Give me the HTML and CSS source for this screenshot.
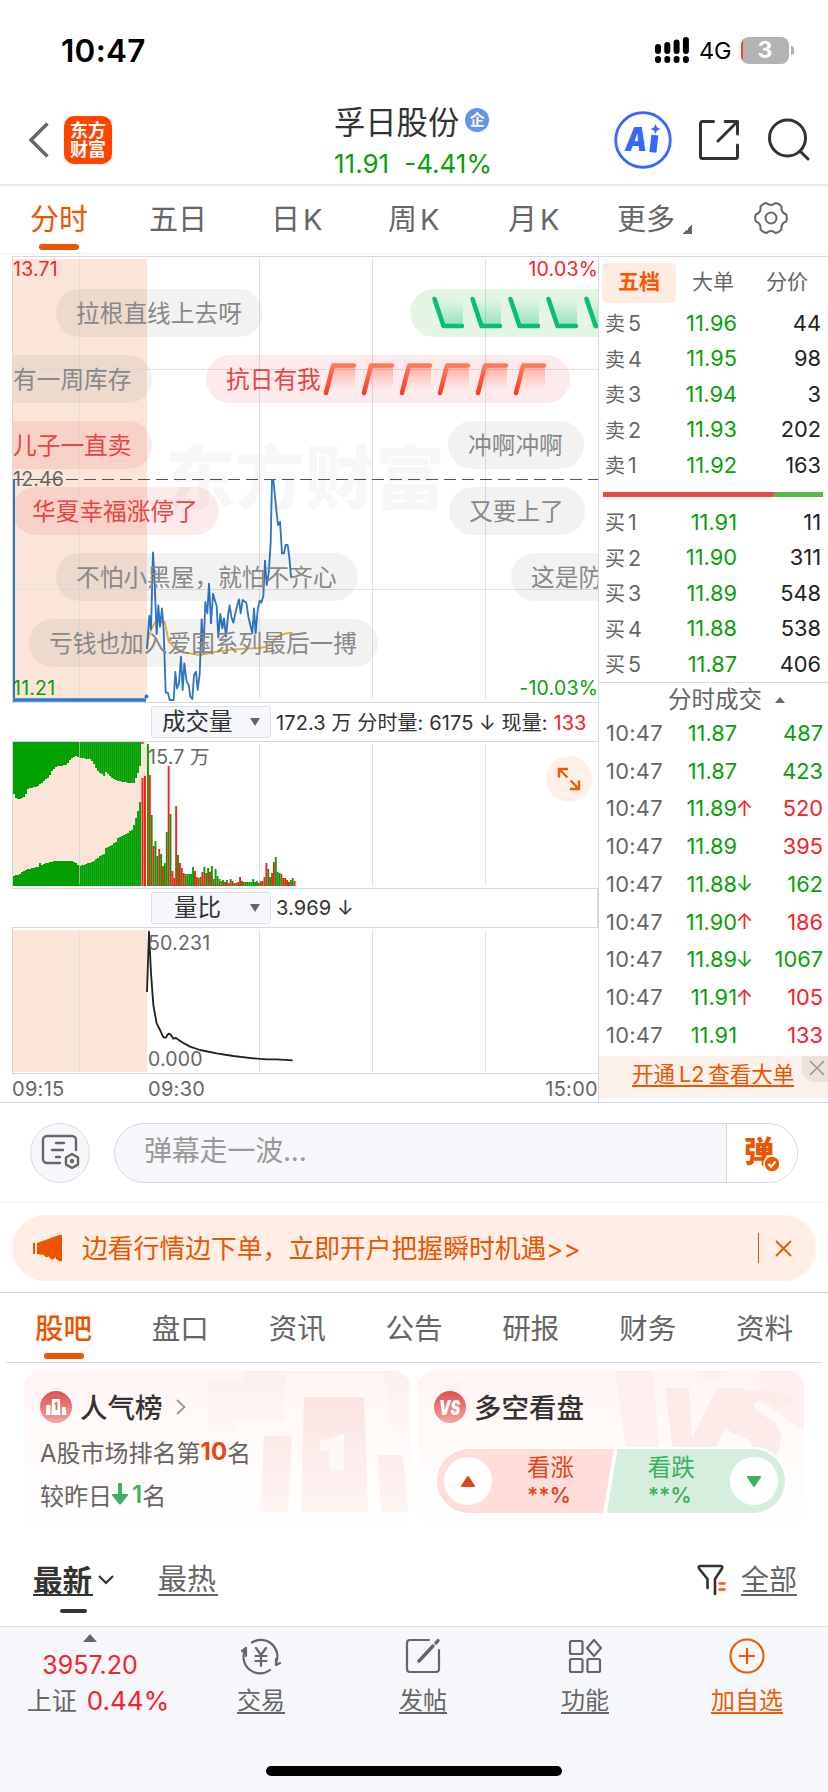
FILE: index.html
```html
<!DOCTYPE html>
<html lang="zh-CN">
  <head>
    <meta charset="UTF-8" />
    <meta name="viewport" content="width=device-width, initial-scale=1.0" />
    <title>孚日股份</title>
    <link rel="stylesheet" href="styles.css">
  </head>
  <body>
    <div class="status-bar">
      <span class="time">10:47</span>
      <svg class="signal" width="34" height="26" viewBox="0 0 34 26">
        <path d="M3 10v4M12.300 8v6M21.600 5.500v8.500M30.900 3v11" stroke="#000" stroke-width="6" stroke-linecap="round"/>
        <path d="M3 22v1M12.300 22v1M21.600 22v1M30.900 22v1" stroke="#000" stroke-width="6" stroke-linecap="round"/>
      </svg>
      <span class="network">4G</span>
      <div class="battery"><span>3</span></div>
      <i class="battery-tip"></i>
    </div>

    <header class="header">
      <svg class="back" width="22" height="38" viewBox="0 0 22 38" fill="none" stroke="#666" stroke-width="3.500">
        <path d="M19.500 2.500L3 19l16.500 16.500"/>
      </svg>
      <div class="logo"><span>东方</span><span>财富</span></div>
      <div class="stock">
        <div class="stock-name">孚日股份<span class="badge">企</span></div>
        <div class="stock-price"><span>11.91</span><span>-4.41%</span></div>
      </div>
      <svg class="ai" width="58" height="58" viewBox="0 0 58 58">
        <circle cx="29" cy="29" r="27.300" fill="none" stroke="#3468ff" stroke-width="2.800"/>
        <text x="11" y="40" class="ai-text" textLength="22" lengthAdjust="spacingAndGlyphs">A</text>
        <path d="M40.500 27.500l-1.200 10.500" stroke="#3468ff" stroke-width="7" stroke-linecap="square"/>
        <path d="M41.500 13l1.500 3.500 3.500 1.500-3.500 1.500-1.500 3.500-1.500-3.500-3.500-1.500 3.500-1.500z" fill="#3468ff"/>
      </svg>
      <svg class="share" width="42" height="42" viewBox="0 0 42 42" fill="none" stroke="#333" stroke-width="3" stroke-linecap="round" stroke-linejoin="round">
        <path d="M15.500 2.500H4.500a2 2 0 0 0-2 2v33a2 2 0 0 0 2 2h33a2 2 0 0 0 2-2V26M27 2.500h12.500V15M39 3L20 22"/>
      </svg>
      <svg class="search" width="44" height="44" viewBox="0 0 44 44" fill="none" stroke="#333" stroke-width="3" stroke-linecap="round">
        <circle cx="20.500" cy="20" r="18"/>
        <path d="M33 33l8 8"/>
      </svg>
    </header>

    <nav class="period-tabs">
      <span class="period active">分时</span>
      <span class="period">五日</span>
      <span class="period">日<b>K</b></span>
      <span class="period">周<b>K</b></span>
      <span class="period">月<b>K</b></span>
      <span class="period more">更多<i></i></span>
      <svg class="gear" width="36" height="36" viewBox="-18 -18 36 36" fill="none" stroke="#666" stroke-width="2" stroke-linejoin="round">
        <path d="M15.200-3.500Q16.500 0 15.200 3.500 9.500 5.500 10.600 11.400 8.300 14.300 4.600 14.900 0 11-4.600 14.900-8.300 14.300-10.600 11.400-9.500 5.500-15.200 3.500-16.500 0-15.200-3.500-9.500-5.500-10.600-11.400-8.300-14.300-4.600-14.900 0-11 4.600-14.900 8.300-14.300 10.600-11.400 9.500-5.500 15.200-3.500z"/>
        <circle r="5.500"/>
      </svg>
    </nav>

    <main class="market">
      <section class="charts">
        <div class="chart price-chart">
          <div class="watermark">东方财富</div>
          <svg width="586" height="446" viewBox="0 0 586 446" fill="none">
            <rect x="1" y="2" width="134" height="442" fill="#fbe5d8"/>
            <path d="M67.500 1v441M247.500 1v441M360.500 1v441M473.500 1v441M1 112.500h585M1 332.500h585" stroke="#e0e2ea"/>
            <path d="M0 222.500h586" stroke="#555" stroke-dasharray="12 6"/>
            <path d="M2 222v219" stroke="#2f76c5" stroke-width="2"/>
            <path d="M1 443h133" stroke="#2f76c5" stroke-width="3.500"/>
            <circle cx="134.500" cy="439.500" r="2" fill="#2f76c5"/>
            <g transform="translate(-12 213) scale(.33333)" stroke-width="5.500" stroke-linejoin="round">
              <polyline stroke="#f5b233" points="441,537 446,500 452,482 458,470 466,455 494,455 499,480 506,515 515,522 524,535 550,548 575,551 600,555 625,550 650,545 700,538 780,534 800,530 818,515 835,498 855,491 878,488"/>
              <polyline stroke="#2f76c5" points="441,537 448,437 453,478 459,247 464,340 470,492 475,406 480,470 486,415 491,480 497,667 504,669 509,690 521,690 526,606 531,655 537,640 543,560 548,660 553,580 560,635 566,645 571,680 577,687 582,615 588,605 593,660 599,612 605,448 610,548 616,396 622,430 627,341 633,460 639,372 650,408 655,502 661,432 667,475 672,445 678,500 684,437 689,406 694,440 700,458 706,430 712,405 717,388 722,430 728,390 739,398 745,440 757,490 762,415 767,490 773,420 779,392 784,398 790,378 795,272 800,345 806,310 812,220 816,30 820,30 828,110 834,165 840,155 846,250 852,250 857,225 863,225 868,262 873,320 878,320"/>
            </g>
          </svg>
          <span class="axis top-left red">13.71</span>
          <span class="axis top-right red">10.03%</span>
          <span class="axis mid-left">12.46</span>
          <span class="axis bottom-left green">11.21</span>
          <span class="axis bottom-right green">-10.03%</span>

          <!-- bullet comments -->
          <div class="bullet row1" style="left: 44px">拉根直线上去呀</div>
          <div class="bullet row1 bullet-green" style="left: 398px">
            <svg width="190" height="34" viewBox="0 0 190 34">
              <defs>
                <linearGradient id="gfade" x1="0" y1="0" x2="0" y2="1"><stop offset="0" stop-color="#0cc07a" stop-opacity="0"/><stop offset="1" stop-color="#0cc07a" stop-opacity=".35"/></linearGradient>
                <g id="down"><path d="M4 3h28v26H13z" fill="url(#gfade)"/><path d="M3.500 3l9 27H31" fill="none" stroke="#08bf78" stroke-width="4.500" stroke-linecap="round" stroke-linejoin="round"/></g>
              </defs>
              <use href="#down"/><use href="#down" x="38"/><use href="#down" x="76"/><use href="#down" x="114"/><use href="#down" x="152"/>
            </svg>
          </div>
          <div class="bullet row2" style="left: -19px">有一周库存</div>
          <div class="bullet row2 bullet-red" style="left: 194px">抗日有我<svg width="227" height="34" viewBox="0 0 227 34">
              <defs>
                <linearGradient id="rfade" x1="0" y1="0" x2="0" y2="1"><stop offset="0" stop-color="#ff4d30" stop-opacity=".4"/><stop offset="1" stop-color="#ff4d30" stop-opacity="0"/></linearGradient>
                <linearGradient id="rline" x1="0" y1="0" x2="0" y2="1"><stop offset="0" stop-color="#ff7a5c"/><stop offset="1" stop-color="#ff3b1f"/></linearGradient>
                <g id="up"><path d="M11 3h22v24H6z" fill="url(#rfade)"/><path d="M4 31L11 3.500h21" fill="none" stroke="url(#rline)" stroke-width="4.500" stroke-linecap="round" stroke-linejoin="round"/></g>
              </defs>
              <use href="#up"/><use href="#up" x="38"/><use href="#up" x="76"/><use href="#up" x="114"/><use href="#up" x="152"/><use href="#up" x="190"/>
            </svg>
          </div>
          <div class="bullet row3 bullet-red" style="left: -19px">儿子一直卖</div>
          <div class="bullet row3" style="left: 436px">冲啊冲啊</div>
          <div class="bullet row4 bullet-red" style="left: 0px">华夏幸福涨停了</div>
          <div class="bullet row4" style="left: 437px">又要上了</div>
          <div class="bullet row5" style="left: 44px">不怕小黑屋，就怕不齐心</div>
          <div class="bullet row5" style="left: 499px">这是防</div>
          <div class="bullet row6" style="left: 17px">亏钱也加入爱国系列最后一搏</div>
        </div>

        <div class="indicator">
          <div class="select"><span>成交量</span><i></i></div>
          <p>172.3 万 分时量: 6175 ↓ 现量: <span class="red">133</span></p>
        </div>
        <div class="chart volume-chart">
          <svg id="volume" width="586" height="146" viewBox="0 0 586 146">
            <rect x="1" y="0" width="134" height="144" fill="#fbe5d8"/>
          </svg>
          <span class="axis sub-top">15.7 万</span>
          <div class="expand">
            <svg width="26" height="26" viewBox="0 0 26 26" fill="none" stroke="#f05a00" stroke-width="2.400">
              <path d="M3 11.500V3h9M3 3l8.500 8.500M23 14.500V23h-9M23 23l-8.500-8.500"/>
            </svg>
          </div>
        </div>

        <div class="indicator boxed">
          <div class="select"><span>量比</span><i></i></div>
          <p>3.969 ↓</p>
        </div>
        <div class="chart ratio-chart">
          <svg width="586" height="146" viewBox="0 0 586 146" fill="none">
            <rect x="1" y="2" width="134" height="142" fill="#fbe5d8"/>
            <path d="M67.500 2v142M247.500 2v142M360.500 2v142M473.500 2v142" stroke="#e0e2ea"/>
            <polyline transform="translate(-12 -228) scale(.33333)" stroke="#222" stroke-width="5.500" stroke-linejoin="round" points="441,876 447,695 453,820 460,915 470,970 480,990 488,1008 492,1013 498,1013 503,1003 508,1001 513,1005 520,1016 528,1014 545,1026 570,1040 600,1050 650,1060 700,1068 760,1075 800,1078 830,1078 878,1081"/>
          </svg>
          <span class="axis sub-top">50.231</span>
          <span class="axis sub-bottom">0.000</span>
        </div>
        <div class="times"><span>09:15</span><span class="open">09:30</span><span class="close-time">15:00</span></div>
      </section>

      <aside class="quotes">
        <div class="quote-tabs"><span class="on">五档</span><span>大单</span><span>分价</span></div>
        <ul class="depth">
          <li><span>卖<u>5</u></span><b>11.96</b><em>44</em></li>
          <li><span>卖<u>4</u></span><b>11.95</b><em>98</em></li>
          <li><span>卖<u>3</u></span><b>11.94</b><em>3</em></li>
          <li><span>卖<u>2</u></span><b>11.93</b><em>202</em></li>
          <li><span>卖<u>1</u></span><b>11.92</b><em>163</em></li>
        </ul>
        <div class="balance"></div>
        <ul class="depth">
          <li><span>买<u>1</u></span><b>11.91</b><em>11</em></li>
          <li><span>买<u>2</u></span><b>11.90</b><em>311</em></li>
          <li><span>买<u>3</u></span><b>11.89</b><em>548</em></li>
          <li><span>买<u>4</u></span><b>11.88</b><em>538</em></li>
          <li><span>买<u>5</u></span><b>11.87</b><em>406</em></li>
        </ul>
        <div class="deals-title">分时成交<i></i></div>
        <ul class="deals">
          <li><span>10:47</span><b>11.87</b><i></i><em class="green">487</em></li>
          <li><span>10:47</span><b>11.87</b><i></i><em class="green">423</em></li>
          <li><span>10:47</span><b>11.89</b><i class="red">↑</i><em class="red">520</em></li>
          <li><span>10:47</span><b>11.89</b><i></i><em class="red">395</em></li>
          <li><span>10:47</span><b>11.88</b><i class="green">↓</i><em class="green">162</em></li>
          <li><span>10:47</span><b>11.90</b><i class="red">↑</i><em class="red">186</em></li>
          <li><span>10:47</span><b>11.89</b><i class="green">↓</i><em class="green">1067</em></li>
          <li><span>10:47</span><b>11.91</b><i class="red">↑</i><em class="red">105</em></li>
          <li><span>10:47</span><b>11.91</b><i></i><em class="red">133</em></li>
        </ul>
        <div class="level2">
          <a>开通 L2 查看大单</a>
          <div class="level2-close">
            <svg width="16" height="16" viewBox="0 0 16 16" stroke="#999" stroke-width="1.600"><path d="M1 1l14 14M15 1L1 15"/></svg>
          </div>
        </div>
      </aside>
    </main>

    <div class="comment-bar">
      <div class="comment-settings">
        <svg width="40" height="40" viewBox="0 0 40 40" fill="none" stroke="#666" stroke-width="2.400" stroke-linecap="round" stroke-linejoin="round">
          <path d="M20 30H7a4 4 0 0 1-4-4V7a4 4 0 0 1 4-4h25a4 4 0 0 1 4 4v10M16 10h8M12 17h11M16 24h4"/>
          <path d="M32 21l6 3.500v7L32 35l-6-3.500v-7z"/>
          <circle cx="32" cy="28" r="1"/>
        </svg>
      </div>
      <div class="comment-input">
        <span>弹幕走一波...</span>
        <div class="comment-toggle">弹
          <svg width="18" height="18" viewBox="0 0 18 18" fill="none">
            <circle cx="9" cy="9" r="8" fill="#f05a00" stroke="#fff" stroke-width="1.500"/>
            <path d="M5.500 9l2.500 3 4.500-5.500" stroke="#fff" stroke-width="2"/>
          </svg>
        </div>
      </div>
    </div>

    <div class="notice-wrap">
      <div class="notice">
        <svg width="32" height="28" viewBox="0 0 32 28" fill="#ec5500">
          <path d="M1 9h2v11H1zM5 9l3-1L27 1h3v26h-3l-3-2v-2l-3 2.500h-2l-2-3-3 1-2-2.500L5 20z"/>
        </svg>
        <span>边看行情边下单，立即开户把握瞬时机遇&gt;&gt;</span>
        <i></i>
        <svg width="17" height="17" viewBox="0 0 17 17" stroke="#ec5500" stroke-width="1.800"><path d="M1 1l15 15M16 1L1 16"/></svg>
      </div>
    </div>

    <nav class="info-tabs">
      <span class="active">股吧</span><span>盘口</span><span>资讯</span><span>公告</span><span>研报</span><span>财务</span><span>资料</span>
    </nav>

    <section class="cards">
      <div class="card">
        <svg class="card-bg" width="386" height="160" viewBox="0 0 386 160">
          <defs>
            <linearGradient id="podium" x1="0" y1="0" x2="0" y2="1"><stop offset="0" stop-color="#fbe4e2"/><stop offset="1" stop-color="#fef5f3"/></linearGradient>
            <linearGradient id="shade" x1="0" y1="0" x2="0" y2="1"><stop offset="0" stop-color="#fdf0ee"/><stop offset="1" stop-color="#fef7f5"/></linearGradient>
          </defs>
          <path d="M184 9h36V0h166v60h-20L360 3h-98l-2 46h-49v13h-27z" fill="url(#shade)"/>
          <path d="M240 65h28l-4 76h-28zM280 26h60l4 115h-67zM354 84h25l5 57h-27z" fill="url(#podium)"/>
          <path d="M296 70l24-7v37h-14l-1-22-9 2z" fill="#fef8f6"/>
        </svg>
        <div class="card-title">
          <svg width="32" height="32" viewBox="0 0 32 32">
            <defs><linearGradient id="disc" x1="0" y1="0" x2="0" y2="1"><stop offset="0" stop-color="#dc504c"/><stop offset="1" stop-color="#f2a5a0"/></linearGradient></defs>
            <circle cx="16" cy="16" r="16" fill="url(#disc)"/>
            <path d="M6.500 14h4v10H6zM12 8h8l.500 16h-9zM22 16h3.500l1 8H22z" fill="#fff"/>
            <path d="M14.500 13l2-1v7" fill="none" stroke="#dc6964" stroke-width="1.800"/>
          </svg>
          <h3>人气榜</h3>
          <svg class="arrow" width="10" height="16" viewBox="0 0 10 16" fill="none" stroke="#999" stroke-width="1.800"><path d="M1 1l7.500 7L1 15"/></svg>
        </div>
        <p>A股市场排名第<b class="hot">10</b>名</p>
        <p>较昨日<svg width="16" height="22" viewBox="0 0 16 22" fill="#3cb062"><path d="M6 1.500a2 2 0 0 1 4 0V11h5.500q1 1 0 2L9 21q-1 1-2 0L.500 13q-1-1 0-2H6z"/></svg><b class="fall">1</b>名</p>
      </div>

      <div class="card">
        <svg class="card-bg" width="386" height="160" viewBox="0 0 386 160">
          <path d="M197 0h38l6 78h-33zM277 0h34l-22 11zM342 0h44v60l-14-10-30-20z" fill="#fdf0ee"/>
          <path d="M247 17h24l3 50 25-50h29l-36 70h-36z" fill="#fdebe9"/>
          <path d="M375 29q-20-14-48-9-26 8-24 28 2 12 22 18 16 6 4 20h28q14-26-5-38-18-10-16-15 8-8 24 4z" fill="#fdebe9"/>
        </svg>
        <div class="card-title">
          <svg width="32" height="32" viewBox="0 0 32 32">
            <circle cx="16" cy="16" r="16" fill="url(#disc)"/>
            <text x="5" y="23.500" class="vs" textLength="21" lengthAdjust="spacingAndGlyphs">VS</text>
          </svg>
          <h3>多空看盘</h3>
        </div>
        <div class="vote">
          <div class="vote-up">
            <i><svg width="16" height="13" viewBox="0 0 16 13"><path d="M8 2l6 9H2z" fill="#e34517" stroke="#e34517" stroke-width="2" stroke-linejoin="round"/></svg></i>
            <span>看涨<b>**%</b></span>
          </div>
          <div class="vote-down">
            <span>看跌<b>**%</b></span>
            <i><svg width="16" height="13" viewBox="0 0 16 13"><path d="M8 11L2 2h12z" fill="#3cb062" stroke="#3cb062" stroke-width="2" stroke-linejoin="round"/></svg></i>
          </div>
        </div>
      </div>
    </section>

    <div class="feed-tabs">
      <span class="feed-on">最新</span>
      <svg class="caret" width="16" height="10" viewBox="0 0 16 10" fill="none" stroke="#333" stroke-width="2.200"><path d="M1 1l7 7 7-7"/></svg>
      <span class="feed-hot">最热</span>
      <svg class="funnel" width="30" height="32" viewBox="0 0 30 32" fill="none" stroke="#333" stroke-width="2.600" stroke-linecap="round" stroke-linejoin="round">
        <path d="M10.500 24v-9L2 4.500q-1-2.500 1.500-2.500h20q2.500 0 1.500 2.500L18 15v15"/>
        <path d="M22.500 19.500h5M22.500 25.500h5" stroke="#ff5500"/>
      </svg>
      <span class="feed-all">全部</span>
    </div>

    <footer class="toolbar">
      <div class="index">
        <i></i>
        <b>3957.20</b>
        <p>上证<b>0.44%</b></p>
      </div>
      <div class="tool">
        <svg width="40" height="38" viewBox="0 0 40 38" fill="none" stroke="#666" stroke-width="2.200" stroke-linecap="round" stroke-linejoin="round">
          <path d="M11 5.500A16.500 16.500 0 0 1 35 26M29 33A16.500 16.500 0 0 1 4 13M1 14l4-3v8M39 26l-4 2v-6M15 11l5 7 5-7M20 18v11M14.500 19h11M14.500 24h11"/>
        </svg>
        <span>交易</span>
      </div>
      <div class="tool">
        <svg width="38" height="38" viewBox="0 0 38 38" fill="none" stroke="#666" stroke-width="2.200" stroke-linecap="round">
          <path d="M25 3H6a3 3 0 0 0-3 3v26a3 3 0 0 0 3 3h26a3 3 0 0 0 3-3V13"/>
          <path d="M15 24L29 9" stroke-width="3.400"/><path d="M32 6l2-2.500" stroke-width="3.400"/>
        </svg>
        <span>发帖</span>
      </div>
      <div class="tool">
        <svg width="36" height="38" viewBox="0 0 36 38" fill="none" stroke="#666" stroke-width="2.200" stroke-linejoin="round">
          <rect x="3" y="4" width="12.500" height="13" rx="1.500"/><rect x="3" y="22" width="12.500" height="13" rx="1.500"/><rect x="20.500" y="22" width="12.500" height="13" rx="1.500"/>
          <path d="M27 3l7 8-7 8-7-8z"/>
        </svg>
        <span>功能</span>
      </div>
      <div class="tool add">
        <svg width="38" height="38" viewBox="0 0 38 38" fill="none" stroke="#f05a00" stroke-width="2.200">
          <circle cx="19" cy="19" r="16.500"/><path d="M19 11v16M11 19h16"/>
        </svg>
        <span>加自选</span>
      </div>
      <div class="home-indicator"></div>
    </footer>
    <script src="charts.js"></script>
  </body>
</html>
```

FILE: styles.css
```css
* {
  box-sizing: border-box;
}
body {
  margin: 0;
  width: 828px;
  height: 1792px;
  overflow: hidden;
  background: #fff;
  color: #666;
  font-family: Inter, "Noto Sans CJK SC", sans-serif;
}
svg {
  display: block;
  flex: none;
}
ul, p, h3 {
  margin: 0;
  padding: 0;
}
ul {
  list-style: none;
}
b, em, i {
  font-style: normal;
  font-weight: 400;
}
.red {
  color: #f5222a;
}
.green {
  color: #0a9f0a;
}

/* status bar */
.status-bar {
  display: flex;
  align-items: center;
  height: 100px;
  padding: 0 34px 0 61px;
  color: #000;
}
.time {
  flex: 1;
  font-size: 31.500px;
  font-weight: 600;
  letter-spacing: 0.300px;
}
.network {
  margin: 0 9px 0 10px;
  width: 33px;
  font-size: 23.500px;
  letter-spacing: -0.200px;
}
.battery {
  width: 48px;
  height: 27px;
  border-radius: 8px;
  background: linear-gradient(90deg, #ff3b30 2px, #b3b3b3 2px);
  color: #fff;
  font-size: 23px;
  font-weight: 700;
  line-height: 27px;
  text-align: center;
}
.battery-tip {
  width: 3px;
  height: 9px;
  margin-left: 2px;
  border-radius: 0 4px 4px 0;
  background: #b3b3b3;
}

/* header */
.header {
  display: flex;
  align-items: center;
  height: 86px;
  padding: 0 17px 4px 28px;
  border-bottom: 2px solid #ebebeb;
}
.logo {
  display: flex;
  flex-direction: column;
  justify-content: center;
  width: 48px;
  height: 48px;
  margin-left: 14px;
  border-radius: 10px;
  background: #ff4400;
  color: #fff;
  font-size: 18px;
  font-weight: 700;
  line-height: 19px;
  text-align: center;
}
.stock {
  flex: 1;
  padding-left: 222px;
}
.stock-name {
  display: flex;
  align-items: center;
  height: 42px;
  color: #333;
  font-size: 31.300px;
}
.badge {
  width: 24px;
  height: 24px;
  margin-left: 6px;
  border-radius: 50%;
  background: #6694ea;
  color: #fff;
  font-size: 15px;
  font-weight: 700;
  line-height: 24px;
  text-align: center;
}
.stock-price {
  display: flex;
  gap: 15px;
  height: 40px;
  color: #0a9f0a;
  font-size: 26px;
  line-height: 45px;
}
.ai-text {
  fill: #3468ff;
  font-size: 33px;
  font-style: italic;
  font-weight: 900;
}
.share {
  margin: 0 27px 0 26px;
}

/* period tabs */
.period-tabs {
  display: flex;
  align-items: center;
  height: 68px;
  padding-left: 30px;
  border-bottom: 1px solid #eee;
  font-size: 29px;
}
.period {
  position: relative;
  width: 118px;
  height: 64px;
  line-height: 64px;
  white-space: nowrap;
}
.period:nth-child(2) {
  padding-left: 1px;
}
.period:nth-child(3) {
  padding-left: 5px;
}
.period:nth-child(4) {
  padding-left: 4px;
}
.period:nth-child(5) {
  padding-left: 6px;
}
.period b {
  margin-left: 3px;
  font-size: 29px;
}
.period.active {
  color: #ec5500;
}
.period.active:after,
.info-tabs .active:after {
  content: "";
  position: absolute;
  left: 9px;
  bottom: 2px;
  width: 40px;
  height: 6px;
  border-radius: 3px;
  background: #ec5500;
}
.more {
  display: flex;
  width: 134px;
  margin-left: -3px;
}
.more i {
  margin: 37px 0 0 8px;
  width: 9px;
  height: 9px;
  background: linear-gradient(135deg, transparent 50%, #666 50%);
}
.gear {
  margin: 0 0 4px 2px;
}

/* charts */
.market {
  display: flex;
  height: 849px;
  padding: 2px 0 0 12px;
  border-bottom: 1px solid #d5d8e0;
}
.charts {
  width: 587px;
  border-right: 1px solid #d5d8e0;
  border-top: 1px solid #d5d8e0;
}
.chart {
  position: relative;
  overflow: hidden;
  border-left: 1px solid #d5d8e0;
  border-bottom: 1px solid #d5d8e0;
}
.chart > svg {
  position: relative;
  margin-left: -1px;
}
.price-chart {
  height: 446px;
}
.watermark {
  position: absolute;
  z-index: 1;
  left: 152px;
  top: 172px;
  color: rgba(0, 0, 0, 0.03);
  font-size: 70px;
  font-weight: 900;
  line-height: 100px;
}
.axis {
  position: absolute;
  z-index: 2;
  color: #666;
  font-size: 19.500px;
  line-height: 24px;
  letter-spacing: 0.200px;
}
.axis.red {
  color: #f5222a;
}
.axis.green {
  color: #0a9f0a;
}
.top-left {
  left: 0;
  top: 0;
}
.top-right {
  right: 0;
  top: 0;
}
.mid-left {
  left: 0;
  top: 210px;
}
.bottom-left {
  left: 0;
  bottom: 2px;
}
.bottom-right {
  right: 0;
  bottom: 2px;
}
.sub-top {
  left: 135px;
  top: 3px;
}
.sub-bottom {
  left: 135px;
  bottom: 2px;
}
.bullet {
  position: absolute;
  z-index: 3;
  display: flex;
  align-items: center;
  height: 48px;
  margin-left: -1px;
  padding: 0 21px 2px 20px;
  border-radius: 24px;
  background: rgba(0, 0, 0, 0.05);
  color: #888;
  font-size: 23.700px;
  white-space: nowrap;
}
.bullet-red {
  background: rgba(235, 50, 50, 0.1);
  color: #eb4343;
}
.bullet-green {
  background: rgba(30, 170, 50, 0.12);
}
.bullet svg {
  margin: 0 0 -1px 1px;
}
.row1 { top: 32px; }
.row2 { top: 98px; }
.row3 { top: 164px; }
.row4 { top: 230px; }
.row5 { top: 296px; }
.row6 { top: 362px; }

.indicator {
  display: flex;
  align-items: center;
  height: 39px;
  padding-left: 139px;
  border-bottom: 1px solid #d5d8e0;
  color: #333;
  font-size: 20px;
}
.indicator.boxed {
  border-right: 1px solid #d5d8e0;
}
.indicator p {
  margin: -1px 0 0 5px;
  letter-spacing: 0.100px;
  white-space: nowrap;
}
.select {
  display: flex;
  align-items: center;
  width: 120px;
  height: 32px;
  padding: 0 10px 1px;
  border: 1px solid #dcdfe5;
  border-radius: 3px;
  background: #f6f7fa;
  font-size: 23.500px;
  line-height: 28px;
}
.select span {
  flex: 1;
}
.boxed .select span {
  padding-left: 12px;
}
.select i {
  border: 5px solid transparent;
  border-top: 8px solid #666;
  border-bottom: 0;
}
.volume-chart {
  height: 147px;
}
.expand {
  position: absolute;
  right: 6px;
  top: 14px;
  display: flex;
  align-items: center;
  justify-content: center;
  width: 46px;
  height: 46px;
  border-radius: 50%;
  background: #fef0e9;
}
.ratio-chart {
  height: 146px;
}
.times {
  display: flex;
  height: 28px;
  font-size: 20px;
  letter-spacing: 0.300px;
  line-height: 30px;
}
.times .open {
  width: 200px;
  margin-left: 83px;
}
.times span:first-child {
  width: 53px;
}
.times .close-time {
  margin-left: auto;
}

/* quotes */
.quotes {
  width: 229px;
}
.quote-tabs {
  display: flex;
  align-items: center;
  height: 49px;
  padding: 3px 0 0 3px;
  border-top: 1px solid #d5d8e0;
  font-size: 21px;
}
.quote-tabs span {
  width: 74px;
  height: 40px;
  border-radius: 5px;
  line-height: 38px;
  text-align: center;
}
.quote-tabs .on {
  background: #feece2;
  color: #ff5500;
  font-weight: 700;
}
.depth {
  height: 178px;
}
.depth li {
  display: flex;
  align-items: center;
  height: 35.500px;
  padding: 0 7px 0 6px;
  font-size: 21.800px;
}
.depth span {
  width: 60px;
  font-size: 20px;
}
.depth u {
  margin-left: 3px;
  font-size: 21.500px;
  text-decoration: none;
}
.depth b {
  width: 72px;
  color: #0a9f0a;
  text-align: right;
}
.depth em {
  flex: 1;
  color: #222;
  text-align: right;
}
.balance {
  height: 5px;
  margin: 9px 5px 7px 4px;
  background: linear-gradient(135deg, #ec4848 77%, #59b946 77%);
}
.deals-title {
  display: flex;
  align-items: center;
  height: 32px;
  padding: 2px 0 0 69px;
  border-top: 1px solid #d5d8e0;
  font-size: 23.500px;
  line-height: 28px;
}
.deals-title i {
  margin-left: 13px;
  border: 5px solid transparent;
  border-bottom: 6px solid #666;
  border-top: 0;
}
.deals {
  height: 342px;
}
.deals li {
  display: flex;
  align-items: center;
  height: 37.750px;
  padding: 0 5px 0 7px;
  font-size: 21.800px;
}
.deals span {
  width: 59px;
  letter-spacing: 0.300px;
}
.deals b {
  width: 72px;
  color: #0a9f0a;
  text-align: right;
}
.deals i {
  display: flex;
  justify-content: center;
  width: 15px;
  font-size: 21px;
}
.deals em {
  flex: 1;
  text-align: right;
}
.level2 {
  position: relative;
  height: 42px;
  padding: 6px 0 0 33px;
  background: #fcf0ea;
}
.level2 a {
  display: inline-block;
  height: 25px;
  border-bottom: 2px solid #ec5500;
  color: #ec5500;
  font-size: 21.500px;
  line-height: 25px;
  word-spacing: -2px;
  white-space: nowrap;
}
.level2-close {
  position: absolute;
  right: 0;
  top: 0;
  display: flex;
  align-items: center;
  justify-content: center;
  width: 26px;
  height: 26px;
  padding: 0 0 3px 4px;
  border-radius: 0 0 0 13px;
  background: #eee2dd;
}

/* comment input */
.comment-bar {
  display: flex;
  align-items: center;
  gap: 24px;
  height: 100px;
  padding: 0 30px;
  border-bottom: 1px solid #eee;
}
.comment-settings {
  display: flex;
  align-items: center;
  justify-content: center;
  width: 60px;
  height: 60px;
  border: 1px solid #d8dbe0;
  border-radius: 50%;
  background: #f6f7fa;
}
.comment-input {
  display: flex;
  flex: 1;
  height: 60px;
  overflow: hidden;
  border: 1px solid #d5d8e0;
  border-radius: 30px;
  background: #f6f7fa;
  color: #999;
  font-size: 28px;
  line-height: 54px;
}
.comment-input span {
  flex: 1;
  padding-left: 29px;
  letter-spacing: -0.200px;
}
.comment-toggle {
  position: relative;
  width: 71px;
  padding-left: 17px;
  border-left: 1px solid #d5d8e0;
  background: #fff;
  color: #ec5500;
  font-size: 30px;
  font-weight: 900;
}
.comment-toggle svg {
  position: absolute;
  left: 36px;
  top: 31px;
}

/* notice */
.notice-wrap {
  height: 90px;
  padding: 12px 12px 0;
  border-bottom: 1px solid #d5d8e0;
}
.notice {
  display: flex;
  align-items: center;
  height: 66px;
  padding: 0 24px 0 20px;
  border-radius: 33px;
  background: #feeee5;
  color: #ec5500;
  font-size: 25.800px;
}
.notice span {
  flex: 1;
  margin: -4px 0 0 18px;
}
.notice i {
  width: 1px;
  height: 30px;
  margin-right: 16px;
  background: #ec5500;
}

/* info tabs */
.info-tabs {
  display: flex;
  justify-content: space-between;
  height: 70px;
  margin: 0 6px;
  padding: 0 29px;
  border-bottom: 1px solid #d5d8e0;
  font-size: 28.500px;
  line-height: 72px;
}
.info-tabs .active {
  position: relative;
  color: #ec5500;
  font-weight: 500;
}
.info-tabs .active:after {
  bottom: 3px;
}

/* cards */
.cards {
  display: flex;
  gap: 8px;
  padding: 8px 24px 0;
}
.card {
  position: relative;
  width: 386px;
  height: 160px;
  padding: 16px;
  overflow: hidden;
  border-radius: 16px;
  background: linear-gradient(#fff5f3, #fffaf8 40%, #fff);
}
.card-bg {
  position: absolute;
  left: 0;
  top: 0;
}
.card-title {
  position: relative;
  display: flex;
  align-items: center;
  height: 40px;
}
.card-title h3 {
  margin: -2px 0 0 8px;
  color: #333;
  font-size: 27.500px;
  font-weight: 500;
}
.arrow {
  margin-left: 13px;
}
.vs {
  fill: #fff;
  font-size: 20px;
  font-weight: 900;
  font-style: italic;
}
.card p {
  position: relative;
  display: flex;
  align-items: center;
  height: 43px;
  padding-top: 5px;
  font-size: 24px;
}
.card p b {
  font-weight: 700;
}
.hot {
  color: #e34517;
}
.card p svg {
  margin: 0 4px 0 0;
}
.card p .fall {
  color: #3cb062;
  font-weight: 600;
}
.vote {
  position: relative;
  display: flex;
  width: 352px;
  height: 68px;
  margin: 20px 0 0 1px;
  border: 2px solid #fff;
  border-radius: 34px;
  background: #fff;
  overflow: hidden;
  line-height: 28px;
}
.vote i {
  display: flex;
  align-items: center;
  justify-content: center;
  width: 48px;
  height: 48px;
  border-radius: 50%;
  background: #fff;
}
.vote span {
  padding-top: 2px;
  font-size: 23.500px;
}
.vote b {
  display: block;
  font-size: 21px;
  font-weight: 600;
}
.vote-up,
.vote-down {
  display: flex;
  align-items: center;
  height: 64px;
}
.vote-up {
  width: 179px;
  padding-left: 7px;
  background: #fedddb;
  color: #e34517;
  clip-path: polygon(0 0, 100% 0, 94% 100%, 0 100%);
}
.vote-up span {
  margin-left: 35px;
}
.vote-down {
  width: 180px;
  margin-left: -7px;
  padding-left: 41px;
  background: #d5eedd;
  color: #3cb062;
  clip-path: polygon(6% 0, 100% 0, 100% 100%, 0 100%);
}
.vote-down i {
  margin-left: 35px;
}

/* feed tabs */
.feed-tabs {
  display: flex;
  align-items: flex-start;
  height: 95px;
  padding: 32px 31px 0 33px;
  font-size: 29px;
  line-height: 34px;
}
.feed-tabs span {
  height: 33px;
  border-bottom: 2px solid #666;
}
.feed-tabs .feed-on {
  position: relative;
  width: 60px;
  border-color: #333;
  color: #333;
  font-size: 29.500px;
  font-weight: 700;
}
.feed-on:after {
  content: "";
  position: absolute;
  left: 27px;
  top: 46px;
  width: 27px;
  height: 4px;
  border-radius: 2px;
  background: #333;
}
.caret {
  margin: 12px 0 0 5px;
}
.feed-hot {
  width: 60px;
  margin-left: 44px;
}
.funnel {
  margin: 1px 14px 0 auto;
}
.feed-tabs .feed-all {
  font-size: 28px;
}

/* bottom toolbar */
.toolbar {
  position: relative;
  display: flex;
  height: 166px;
  border-top: 1px solid #d9dce2;
  background: #f6f7fa;
}
.index {
  display: flex;
  flex-direction: column;
  align-items: center;
  width: 180px;
  padding: 7px 0 0 0;
  font-size: 25px;
}
.index i {
  margin-bottom: 5px;
  border: 7px solid transparent;
  border-top: 0;
  border-bottom: 8px solid #666;
}
.index b {
  color: #f5222a;
  font-size: 25px;
  line-height: 36px;
}
.index p {
  margin-left: 16px;
  line-height: 34px;
  white-space: nowrap;
}
.index p b {
  margin-left: 10px;
  font-size: 26px;
}
.tool {
  display: flex;
  flex-direction: column;
  align-items: center;
  width: 162px;
  padding-top: 10px;
  font-size: 24px;
}
.tool span {
  height: 27px;
  margin-top: 12px;
  border-bottom: 2px solid #666;
  line-height: 28px;
}
.tool.add {
  color: #f05a00;
}
.tool.add span {
  border-color: #f05a00;
}
.home-indicator {
  position: absolute;
  left: 266px;
  bottom: 16px;
  width: 296px;
  height: 10px;
  border-radius: 5px;
  background: #000;
}
```

FILE: charts.js
```js
const svg = document.getElementById("volume");
const BOTTOM = 144;

function rect(x, y, width, height, fill) {
  const el = document.createElementNS("http://www.w3.org/2000/svg", "rect");
  el.setAttribute("x", x);
  el.setAttribute("y", y);
  el.setAttribute("width", width);
  el.setAttribute("height", height);
  el.setAttribute("fill", fill);
  svg.appendChild(el);
}

// value of a [x, y] contour at x
function at(points, x) {
  for (let i = 1; i < points.length; i++) {
    const [x0, y0] = points[i - 1];
    const [x1, y1] = points[i];
    if (x <= x1) return y0 + ((y1 - y0) * (x - x0)) / (x1 - x0);
  }
  return points[points.length - 1][1];
}

// call auction, 09:15 - 09:30
const upper = [[1,52],[3,56],[7,57],[12,55],[14,48],[17,46],[24,45],[31,39],[36,35],[39,29],[44,24],[54,23],[58,16],[64,14],[67,16],[78,17],[82,24],[85,29],[91,34],[93,30],[97,34],[102,38],[109,40],[121,41],[124,34],[127,24],[129,12],[130,1]];
const lower = [[1,134],[7,132],[10,129],[16,127],[25,125],[27,121],[29,123],[34,121],[43,119],[58,119],[64,121],[66,124],[73,122],[81,119],[87,114],[91,112],[92,107],[97,104],[103,100],[104,97],[113,92],[120,87],[122,79],[124,72],[126,65],[128,54],[129,37]];
for (let x = 1; x < 129; x += 2) {
  const top = Math.round(at(upper, x));
  const low = Math.round(at(lower, x));
  rect(x, 0, 2, top, "#00a000");
  rect(x, low, 2, BOTTOM - low, "#00a000");
  if (x > 66) {
    rect(x, 0, 0.5, top, "#3cb43c");
    rect(x, low, 0.5, BOTTOM - low, "#3cb43c");
  }
}
rect(129.500, 0, 2, 2, "#fa1e1e");
rect(129.500, 36, 2, 108, "#fa1e1e");
rect(132, 34, 2, 110, "#fa1e1e");

// vertical grid
[67, 247, 360, 473].forEach((x) => rect(x, x < 100 ? 0 : 2, 1, 142, "rgba(205,208,220,.6)"));

// minute volume, g = down, r = up
const minutes = "g142 r111 g71 r40 g45 g30 r37 g32 r20 g23 g54 r120 g72 r15 r8 r80 g31 r23 r18 g13 r12 g12 g12 g12 g19 r15 r9 g8 r9 r14 g19 r13 g18 r14 g20 r7 g17 g10 g7 r5 g6 r4 g6 r3 r7 g5 r3 g3 r4 r9 g5 r4 g4 g4 g4 g4 g7 g4 g5 r3 r5 g5 r9 r23 g17 g9 r13 r24 g29 g14 g13 r12 g8 r8 r6 r4 g6 g8 r5";
minutes.split(" ").forEach((m, i) => {
  const h = Number(m.slice(1));
  rect(135 + i * 1.880, BOTTOM - h, 1.880, h, m[0] === "g" ? "#00a000" : "#fa1e1e");
});
```
